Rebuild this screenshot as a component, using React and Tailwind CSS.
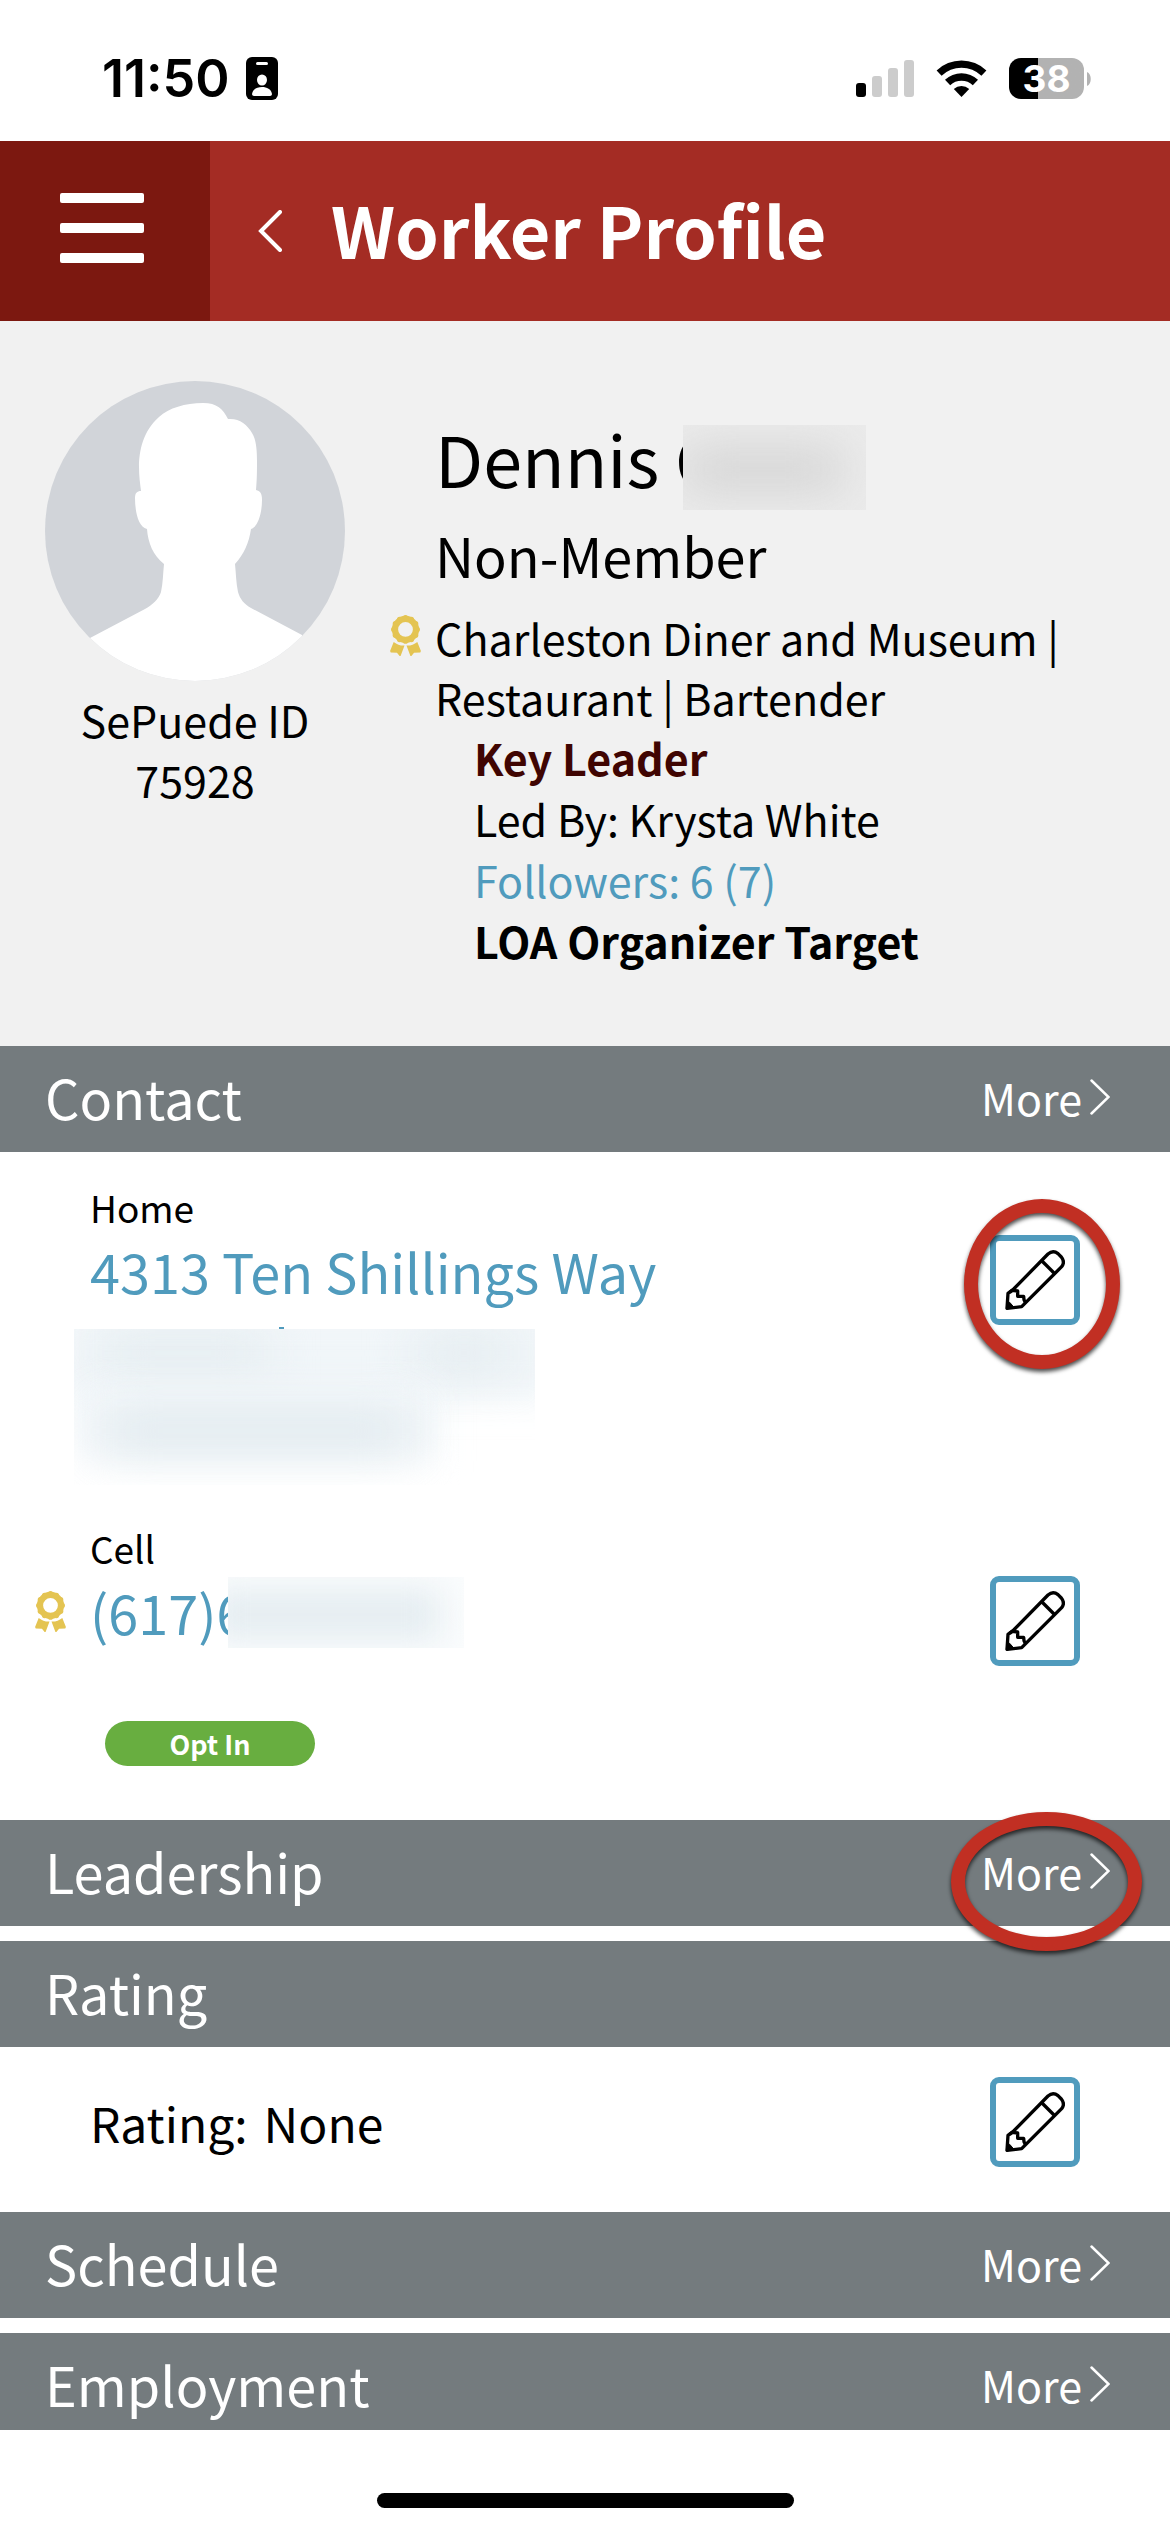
function StatusBar() {
  return (
    <div className="h-[141px] flex items-center justify-between pt-4 pl-[102px] pr-[79px] text-black font-['Inter',sans-serif]">
      <div className="flex items-center gap-4">
        <span className="text-[52px] leading-[60px] font-semibold">11:50</span>
        <svg width="32" height="43" viewBox="0 0 32 43">
          <rect width="32" height="43" rx="6" fill="#000" />
          <rect x="10" y="5" width="12" height="3" rx="1.5" fill="#fff" />
          <ellipse cx="16" cy="23" rx="5" ry="5.5" fill="#fff" />
          <path d="M6 37C7 32 11 30 16 30s9 2 10 7c0 1-1 2-2 2H8c-1 0-2-1-2-2z" fill="#fff" />
        </svg>
      </div>
      <div className="flex items-center">
        <svg width="58" height="37" viewBox="0 0 58 37">
          <rect y="23" width="10" height="14" rx="3" fill="#000" />
          <rect x="16" y="16" width="10" height="21" rx="3" fill="#ccc" />
          <rect x="32" y="8" width="10" height="29" rx="3" fill="#ccc" />
          <rect x="48" width="10" height="37" rx="3" fill="#ccc" />
        </svg>
        <svg className="ml-[22px]" width="51" height="37" viewBox="0 0 51 37">
          <path d="M0.600 10.500a36 36 0 0 1 49.800 0l-5 5.300a28.500 28.500 0 0 0-39.800 0z" fill="#000" />
          <path d="M9 19.800a24 24 0 0 1 33 0l-5.200 5.400a16.500 16.500 0 0 0-22.600 0z" fill="#000" />
          <path d="M17.800 29a11.500 11.500 0 0 1 15.400 0l-7.700 8z" fill="#000" />
        </svg>
        <div className="ml-[22px] w-[75px] h-[41px] rounded-xl bg-linear-to-r from-black from-[39%] to-[#b2b2b2] to-[39%] flex items-center justify-center text-white text-[37px] leading-[40px] font-bold">
          38
        </div>
        <svg className="ml-[3px]" width="4" height="14" viewBox="0 0 4 14">
          <path d="M0 0c5 2 5 12 0 14z" fill="#b2b2b2" />
        </svg>
      </div>
    </div>
  );
}

function Header() {
  return (
    <header className="h-[180px] flex bg-[#a42c24] text-white">
      <button aria-label="Menu" className="w-[210px] bg-[#7c1810] flex flex-col gap-5 pl-[60px] pt-[52px]">
        <span className="w-[84px] h-[10px] rounded-xs bg-white" />
        <span className="w-[84px] h-[10px] rounded-xs bg-white" />
        <span className="w-[84px] h-[10px] rounded-xs bg-white" />
      </button>
      <button aria-label="Back" className="w-[121px] pl-12">
        <svg width="24" height="42" viewBox="0 0 24 42" fill="none" stroke="#fff" strokeWidth="4" strokeLinecap="round">
          <path d="M22 2L3 21l19 19" />
        </svg>
      </button>
      <h1 className="self-center pb-1 text-[70px] leading-[90px] font-bold">Worker Profile</h1>
    </header>
  );
}

function Avatar() {
  return (
    <svg className="rounded-full" width="300" height="300" viewBox="0 0 300 300">
      <rect width="300" height="300" fill="#d1d4d9" />
      <path
        d="M183 38C178 28 172 22 158 22C140 22 124 27 114 36C98 50 94 70 94 86C94 95 95 102 96 110C92 110 90 112 90 117C90 130 93 146 102 148C103 162 108 174 119 183C118 192 118 202 116 211C114 218 107 224 100 228L45 257V300H257V254L206 227C199 223 195 218 193 211C191 202 191 192 190 183C199 173 204 162 206 148C213 146 217 132 217 119C217 112 215 110 211 109C212 98 212 90 212 80C212 68 211 58 207 52C202 43 194 37 183 38Z"
        fill="#fff"
      />
    </svg>
  );
}

function Award() {
  return (
    <svg width="31" height="41" viewBox="0 0 94 125" fill="#e4c452">
      <circle cx="47" cy="44" r="32" fill="none" stroke="#e4c452" strokeWidth="19" />
      <g>
        <circle cx="47" cy="8" r="8" />
        <circle cx="65" cy="13" r="8" />
        <circle cx="78" cy="26" r="8" />
        <circle cx="83" cy="44" r="8" />
        <circle cx="78" cy="62" r="8" />
        <circle cx="65" cy="75" r="8" />
        <circle cx="47" cy="80" r="8" />
        <circle cx="29" cy="75" r="8" />
        <circle cx="16" cy="62" r="8" />
        <circle cx="11" cy="44" r="8" />
        <circle cx="16" cy="26" r="8" />
        <circle cx="29" cy="13" r="8" />
      </g>
      <path d="M11 82Q26 94 44 93L32 125H29L21 115L2 114L0 110Z" />
      <path d="M83 82Q68 94 50 93L62 125H65L73 115L92 114L94 110Z" />
    </svg>
  );
}

function Profile() {
  return (
    <section className="flex bg-[#f1f1f1] pt-[60px] pb-[75px] px-[45px] text-[43px] leading-[60px]">
      <div className="w-[300px] shrink-0 text-center">
        <Avatar />
        <p className="mt-2">
          SePuede ID
          <br />
          75928
        </p>
      </div>
      <div className="flex-1 pl-[90px] pt-8">
        <h2 className="text-[70px] leading-[90px]">
          Dennis{" "}
          <span className="relative">
            C
            <span className="absolute left-2 top-[18px] w-[183px] h-[85px] overflow-hidden bg-[#ebebeb]">
              <span className="absolute left-0 right-6 top-7 bottom-6 bg-[#cecece] blur-xl" />
            </span>
          </span>
        </h2>
        <p className="mt-3 text-[54px] leading-[80px]">Non-Member</p>
        <div className="relative mt-3">
          <span className="absolute -left-[45px] top-2">
            <Award />
          </span>
          <p>Charleston Diner and Museum | Restaurant | Bartender</p>
        </div>
        <div className="pl-[39px] leading-[61px]">
          <p className="font-bold text-[#400502]">Key Leader</p>
          <p>Led By: Krysta White</p>
          <p>
            <a href="#followers" className="text-[#509bbd]">Followers: 6 (7)</a>
          </p>
          <p className="font-bold">LOA Organizer Target</p>
        </div>
      </div>
    </section>
  );
}

function SectionBar({ title, more, marked }) {
  return (
    <div className="relative h-[106px] flex items-center justify-between pl-[45px] pr-[60px] pb-1 bg-[#747b7e] text-white">
      <h2 className="text-[54px] leading-[80px]">{title}</h2>
      {more && (
        <button className="flex items-center gap-2 text-[43px] leading-[60px]">
          More
          <svg width="20" height="36" viewBox="0 0 20 36" fill="none" stroke="#fff" strokeWidth="2.500" strokeLinecap="round">
            <path d="M1.500 1.500L18.500 18L1.500 34.500" />
          </svg>
        </button>
      )}
      {marked && (
        <span className="absolute z-10 right-7 -top-2 w-[191px] h-[139px] rounded-[50%] border-[14px] border-[#c12f23] drop-shadow-[0_3px_2px_rgba(0,0,0,0.7)] pointer-events-none" />
      )}
    </div>
  );
}

function EditButton({ label, marked }) {
  return (
    <button aria-label={label} className="relative w-[90px] h-[90px] shrink-0 flex items-center justify-center rounded-[9px] border-6 border-[#509bbd] bg-white">
      <svg width="60" height="60" viewBox="0 0 180 180" fill="none" stroke="#000" strokeWidth="10" strokeLinejoin="round">
        <path d="M9 130L26 117L129 12Q144 -1 159 11L169 21Q181 36 170 50L50 170L6 175Z" />
        <path d="M111 33L147 69" />
        <path d="M14 127L22 121L38 123V139H56L57 149L61 157" />
        <path d="M5 156L4 177L28 173L14 157Z" fill="#000" strokeWidth="3" />
      </svg>
      {marked && (
        <span className="absolute z-10 -left-8 -top-[42px] w-[156px] h-[170px] rounded-[50%] border-[14px] border-[#c12f23] drop-shadow-[0_3px_2px_rgba(0,0,0,0.7)] pointer-events-none" />
      )}
    </button>
  );
}

function ContactSection() {
  return (
    <section className="pt-[29px] pb-[54px] pr-[90px]">
      <div className="flex">
        <div className="w-[90px] shrink-0" />
        <div className="flex-1">
          <p className="text-[37px] leading-[52px]">Home</p>
          <a href="#home" className="block text-[54px] leading-[75px] text-[#509bbd]">4313 Ten Shillings Way</a>
          {/* rest of the address is hidden */}
          <div className="pt-[19px] h-[214px]">
            <div className="ml-[189px] w-[5px] h-[2px] bg-[#509bbd]" />
            <div className="relative -ml-4 w-[461px] h-[156px] overflow-hidden">
              <div className="absolute -left-4 -top-6 w-[510px] h-[96px] bg-[#f1f6f9] blur-lg" />
              <div className="absolute left-6 top-2 w-[170px] h-8 bg-[#e1eaee] blur-xl" />
              <div className="absolute left-[340px] top-2 w-[100px] h-8 bg-[#e1eaee] blur-xl" />
              <div className="absolute left-1 top-[56px] w-[360px] h-[76px] bg-[#f1f6f9] blur-lg" />
              <div className="absolute left-8 top-[86px] w-[300px] h-8 bg-[#dde7ec] blur-xl" />
            </div>
          </div>
        </div>
        <div className="pt-[54px]">
          <EditButton label="Edit home address" marked />
        </div>
      </div>
      <div className="flex">
        <div className="w-[90px] shrink-0 pl-[35px] pt-[69px]">
          <Award />
        </div>
        <div className="flex-1">
          <p className="text-[37px] leading-[52px]">Cell</p>
          <a href="#cell" className="relative block text-[54px] leading-[75px] text-[#509bbd]">
            (617)6
            <span className="absolute left-[138px] top-[3px] w-[236px] h-[71px] overflow-hidden bg-[#fafcfd]">
              <span className="absolute -left-4 right-6 top-3 bottom-2 bg-[#e5edf1] blur-lg" />
            </span>
          </a>
          <div className="mt-[72px] ml-[15px] w-[210px] h-[45px] rounded-full bg-[#68ae40] text-center text-white text-[27px] leading-[45px] font-bold">
            Opt In
          </div>
        </div>
        <div className="pt-[54px]">
          <EditButton label="Edit cell phone" />
        </div>
      </div>
    </section>
  );
}

function RatingSection() {
  return (
    <section className="flex items-center justify-between pl-[90px] pr-[90px] pt-[30px] pb-[45px]">
      <p className="flex gap-4 text-5xl leading-[60px]">
        <span>Rating:</span>
        <span>None</span>
      </p>
      <EditButton label="Edit rating" />
    </section>
  );
}

function App() {
  return (
    <div className="bg-white text-black font-['Noto_Sans_CJK_SC','Noto_Sans',sans-serif]">
      <StatusBar />
      <Header />
      <main>
        <Profile />
        <SectionBar title="Contact" more />
        <ContactSection />
        <div className="flex flex-col gap-[15px]">
          <SectionBar title="Leadership" more marked />
          <SectionBar title="Rating" />
        </div>
        <RatingSection />
        <div className="flex flex-col gap-[15px]">
          <SectionBar title="Schedule" more />
          <SectionBar title="Employment" more />
        </div>
      </main>
      {/* covers the bottom edge of the last bar */}
      <footer className="relative -mt-[9px] bg-white pt-[63px] pb-6">
        <div className="mx-auto w-[417px] h-[15px] rounded-full bg-black" />
      </footer>
    </div>
  );
}

export default App;
